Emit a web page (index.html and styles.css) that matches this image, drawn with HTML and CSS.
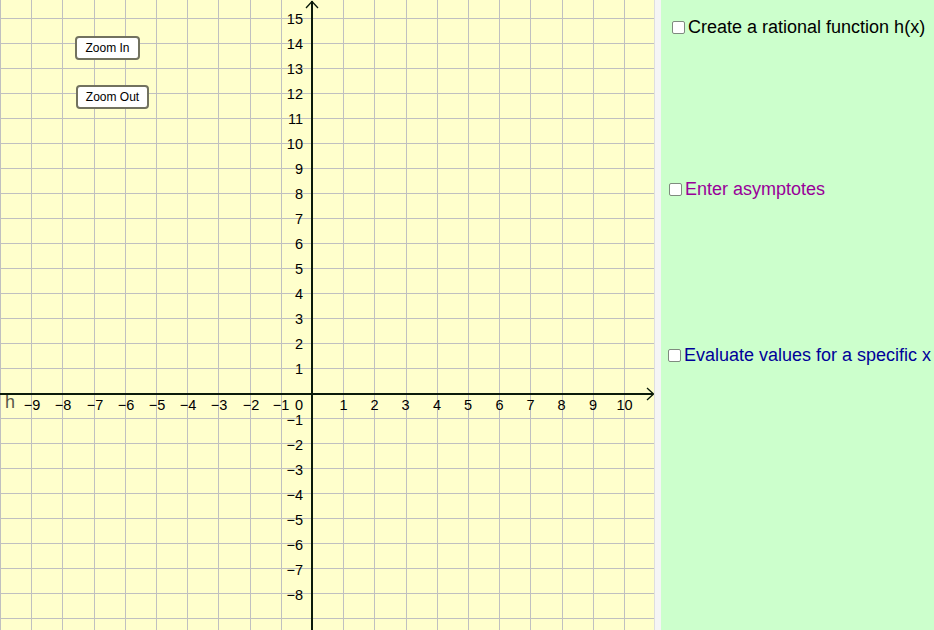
FILE: index.html
```html
<!DOCTYPE html>
<html>
<head>
<meta charset="utf-8">
<link rel="stylesheet" href="styles.css">
</head>
<body>
<div class="app">
  <div class="graph">
    <svg class="plot" width="654" height="630" viewBox="0 0 654 630">
      <g class="grid">
        <line x1="0.5" y1="0" x2="0.5" y2="630"/>
        <line x1="31.5" y1="0" x2="31.5" y2="630"/>
        <line x1="62.5" y1="0" x2="62.5" y2="630"/>
        <line x1="94.5" y1="0" x2="94.5" y2="630"/>
        <line x1="125.5" y1="0" x2="125.5" y2="630"/>
        <line x1="156.5" y1="0" x2="156.5" y2="630"/>
        <line x1="187.5" y1="0" x2="187.5" y2="630"/>
        <line x1="218.5" y1="0" x2="218.5" y2="630"/>
        <line x1="250.5" y1="0" x2="250.5" y2="630"/>
        <line x1="281.5" y1="0" x2="281.5" y2="630"/>
        <line x1="343.5" y1="0" x2="343.5" y2="630"/>
        <line x1="374.5" y1="0" x2="374.5" y2="630"/>
        <line x1="406.5" y1="0" x2="406.5" y2="630"/>
        <line x1="437.5" y1="0" x2="437.5" y2="630"/>
        <line x1="468.5" y1="0" x2="468.5" y2="630"/>
        <line x1="499.5" y1="0" x2="499.5" y2="630"/>
        <line x1="530.5" y1="0" x2="530.5" y2="630"/>
        <line x1="562.5" y1="0" x2="562.5" y2="630"/>
        <line x1="593.5" y1="0" x2="593.5" y2="630"/>
        <line x1="624.5" y1="0" x2="624.5" y2="630"/>

        <line x1="0" y1="18.5" x2="654" y2="18.5"/>
        <line x1="0" y1="43.5" x2="654" y2="43.5"/>
        <line x1="0" y1="68.5" x2="654" y2="68.5"/>
        <line x1="0" y1="93.5" x2="654" y2="93.5"/>
        <line x1="0" y1="118.5" x2="654" y2="118.5"/>
        <line x1="0" y1="143.5" x2="654" y2="143.5"/>
        <line x1="0" y1="168.5" x2="654" y2="168.5"/>
        <line x1="0" y1="193.5" x2="654" y2="193.5"/>
        <line x1="0" y1="218.5" x2="654" y2="218.5"/>
        <line x1="0" y1="243.5" x2="654" y2="243.5"/>
        <line x1="0" y1="268.5" x2="654" y2="268.5"/>
        <line x1="0" y1="293.5" x2="654" y2="293.5"/>
        <line x1="0" y1="318.5" x2="654" y2="318.5"/>
        <line x1="0" y1="343.5" x2="654" y2="343.5"/>
        <line x1="0" y1="368.5" x2="654" y2="368.5"/>
        <line x1="0" y1="418.5" x2="654" y2="418.5"/>
        <line x1="0" y1="443.5" x2="654" y2="443.5"/>
        <line x1="0" y1="468.5" x2="654" y2="468.5"/>
        <line x1="0" y1="493.5" x2="654" y2="493.5"/>
        <line x1="0" y1="518.5" x2="654" y2="518.5"/>
        <line x1="0" y1="543.5" x2="654" y2="543.5"/>
        <line x1="0" y1="568.5" x2="654" y2="568.5"/>
        <line x1="0" y1="593.5" x2="654" y2="593.5"/>
        <line x1="0" y1="618.5" x2="654" y2="618.5"/>
      </g>

      <g class="axes">
        <line x1="312" y1="1" x2="312" y2="630"/>
        <line x1="0" y1="394" x2="653" y2="394"/>
        <polyline class="arrow" points="306,8 312,1.5 318,8"/>
        <polyline class="arrow" points="647,388 653.5,394 647,400"/>
      </g>

      <g class="ylabels">
        <text x="303" y="24">15</text>
        <text x="303" y="49">14</text>
        <text x="303" y="74">13</text>
        <text x="303" y="99">12</text>
        <text x="303" y="124">11</text>
        <text x="303" y="149">10</text>
        <text x="303" y="174">9</text>
        <text x="303" y="199">8</text>
        <text x="303" y="224">7</text>
        <text x="303" y="249">6</text>
        <text x="303" y="274">5</text>
        <text x="303" y="299">4</text>
        <text x="303" y="324">3</text>
        <text x="303" y="349">2</text>
        <text x="303" y="374">1</text>
        <text x="303" y="425">−1</text>
        <text x="303" y="450">−2</text>
        <text x="303" y="475">−3</text>
        <text x="303" y="500">−4</text>
        <text x="303" y="525">−5</text>
        <text x="303" y="550">−6</text>
        <text x="303" y="575">−7</text>
        <text x="303" y="600">−8</text>
        <text x="303" y="410">0</text>
      </g>

      <g class="xlabels">
        <text x="32" y="410">−9</text>
        <text x="63" y="410">−8</text>
        <text x="95" y="410">−7</text>
        <text x="126" y="410">−6</text>
        <text x="157" y="410">−5</text>
        <text x="188" y="410">−4</text>
        <text x="219" y="410">−3</text>
        <text x="251" y="410">−2</text>
        <text x="281" y="410">−1</text>
        <text x="343.5" y="410">1</text>
        <text x="374.5" y="410">2</text>
        <text x="405.5" y="410">3</text>
        <text x="437" y="410">4</text>
        <text x="468" y="410">5</text>
        <text x="499.5" y="410">6</text>
        <text x="530.5" y="410">7</text>
        <text x="561.5" y="410">8</text>
        <text x="593" y="410">9</text>
        <text x="624.5" y="410">10</text>
      </g>

      <text class="fn-label" x="5" y="408">h</text>
    </svg>

    <button class="zoom-btn zoom-in" type="button">Zoom In</button>
    <button class="zoom-btn zoom-out" type="button">Zoom Out</button>
  </div>

  <div class="divider"></div>

  <div class="panel">
    <label class="option opt-create">
      <span class="box"></span>
      <span class="opt-text">Create a rational function h(x)</span>
    </label>
    <label class="option opt-asym">
      <span class="box"></span>
      <span class="opt-text">Enter asymptotes</span>
    </label>
    <label class="option opt-eval">
      <span class="box"></span>
      <span class="opt-text">Evaluate values for a specific x</span>
    </label>
  </div>
</div>
</body>
</html>
```

FILE: styles.css
```css
html, body {
  margin: 0;
  padding: 0;
  width: 934px;
  height: 630px;
  overflow: hidden;
  font-family: "Liberation Sans", Arial, sans-serif;
}

.app {
  display: flex;
  width: 934px;
  height: 630px;
}

.graph {
  position: relative;
  width: 654px;
  height: 630px;
  flex: none;
  background: #ffffcc;
  overflow: hidden;
}

.plot {
  display: block;
}

.grid line {
  stroke: #c0c0c0;
  stroke-width: 1;
  shape-rendering: crispEdges;
}

.axes line {
  stroke: #0a1a0a;
  stroke-width: 2;
  shape-rendering: crispEdges;
}

.axes .arrow {
  fill: none;
  stroke: #0a1a0a;
  stroke-width: 1.3;
}

.ylabels text {
  font-family: "Liberation Sans", Arial, sans-serif;
  font-size: 14.5px;
  fill: #000;
  text-anchor: end;
}

.xlabels text {
  font-family: "Liberation Sans", Arial, sans-serif;
  font-size: 14.5px;
  fill: #000;
  text-anchor: middle;
}

.fn-label {
  font-family: "Liberation Sans", Arial, sans-serif;
  font-size: 18px;
  fill: #58584a;
}

.zoom-btn {
  position: absolute;
  box-sizing: border-box;
  height: 24px;
  padding: 0;
  background: #ffffff;
  border: 2px solid #72725f;
  border-radius: 4px;
  font-family: "Liberation Sans", Arial, sans-serif;
  font-size: 12px;
  color: #000;
  line-height: 20px;
  text-align: center;
}

.zoom-in {
  left: 75px;
  top: 36px;
  width: 65px;
}

.zoom-out {
  left: 76px;
  top: 85px;
  width: 73px;
}

.divider {
  flex: none;
  box-sizing: border-box;
  width: 7px;
  height: 630px;
  background: #f5f5f5;
  border-left: 1px solid #dedede;
}

.panel {
  flex: 1;
  height: 630px;
  background: #ccffcc;
  display: flex;
  flex-direction: column;
  overflow: hidden;
}

.option {
  display: flex;
  align-items: center;
  height: 24px;
  white-space: nowrap;
  font-size: 18px;
  line-height: 24px;
}

.box {
  flex: none;
  box-sizing: border-box;
  width: 13px;
  height: 13px;
  margin-right: 3px;
  background: #ffffff;
  border: 1.5px solid #7f8a7f;
  border-radius: 2px;
}

.opt-create {
  margin-top: 15px;
  padding-left: 11px;
  color: #000000;
}

.opt-asym {
  margin-top: 138px;
  padding-left: 8px;
  color: #990099;
}

.opt-eval {
  margin-top: 142px;
  padding-left: 7px;
  color: #000099;
}
```
